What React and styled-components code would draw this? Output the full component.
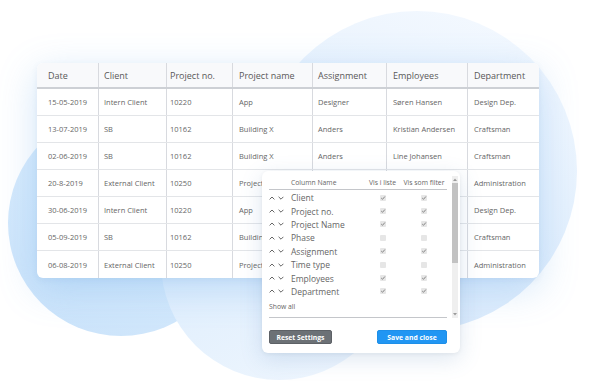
import React from "react";
import styled, { createGlobalStyle } from "styled-components";

/*
    Background blobs
    Table (header + rows)
    Column settings popup over the table
*/

const columns = [
  { title: "Date", width: 61, pad: 11 },
  { title: "Client", width: 68, pad: 6 },
  { title: "Project no.", width: 66, pad: 4 },
  { title: "Project name", width: 80, pad: 7 },
  { title: "Assignment", width: 74, pad: 6 },
  { title: "Employees", width: 81, pad: 7 },
  { title: "Department", width: 72, pad: 7 },
];

const rows = [
  ["15-05-2019", "Intern Client", "10220", "App", "Designer", "Søren Hansen", "Design Dep."],
  ["13-07-2019", "SB", "10162", "Building X", "Anders", "Kristian Andersen", "Craftsman"],
  ["02-06-2019", "SB", "10162", "Building X", "Anders", "Line Johansen", "Craftsman"],
  ["20-8-2019", "External Client", "10250", "Project", "", "", "Administration"],
  ["30-06-2019", "Intern Client", "10220", "App", "", "", "Design Dep."],
  ["05-09-2019", "SB", "10162", "Building", "", "", "Craftsman"],
  ["06-08-2019", "External Client", "10250", "Project", "", "", "Administration"],
];

const settings = [
  { name: "Client", list: true, filter: true },
  { name: "Project no.", list: true, filter: true },
  { name: "Project Name", list: true, filter: true },
  { name: "Phase", list: false, filter: false },
  { name: "Assignment", list: true, filter: true },
  { name: "Time type", list: false, filter: false },
  { name: "Employees", list: true, filter: true },
  { name: "Department", list: true, filter: true },
];

const gridCols = columns.map((c) => `${c.width}px`).join(" ");

const Chevron = ({ up }) => (
  <svg width="6" height="4" viewBox="0 0 6 4">
    <polyline
      points={up ? "0.6,3.4 3,1 5.4,3.4" : "0.6,0.8 3,3.2 5.4,0.8"}
      fill="none"
      stroke="#555"
      strokeWidth="0.9"
    />
  </svg>
);

const Check = ({ checked }) => (
  <CheckBox>
    {checked && (
      <svg width="6" height="6" viewBox="0 0 6 6">
        <polyline points="1.2,3 2.5,4.3 4.9,1.5" fill="none" stroke="#7a7a7a" strokeWidth="0.9" />
      </svg>
    )}
  </CheckBox>
);

const App = () => {
  return (
    <Stage>
      <GlobalStyle />
      <BlobRight />
      <BlobLeft />
      <BlobMiddle />

      <Table>
        <HeadRow>
          {columns.map((c, i) => (
            <HeadCell key={c.title} $pad={c.pad} $first={i === 0}>
              {c.title}
            </HeadCell>
          ))}
        </HeadRow>
        {rows.map((r, ri) => (
          <BodyRow key={ri} $last={ri === rows.length - 1}>
            {r.map((v, ci) => (
              <BodyCell key={ci} $pad={columns[ci].pad} $first={ci === 0}>
                {v}
              </BodyCell>
            ))}
          </BodyRow>
        ))}
      </Table>

      <Popup>
        <ScrollArea>
          <List>
            <ListHead>
              <span />
              <span>Column Name</span>
              <Centered>Vis i liste</Centered>
              <Centered>Vis som filter</Centered>
            </ListHead>
            <ListBody>
              {settings.map((s) => (
                <ListRow key={s.name}>
                  <Arrows>
                    <Chevron up />
                    <Chevron />
                  </Arrows>
                  <Label>{s.name}</Label>
                  <Centered>
                    <Check checked={s.list} />
                  </Centered>
                  <Centered>
                    <Check checked={s.filter} />
                  </Centered>
                </ListRow>
              ))}
            </ListBody>
            <ShowAll>Show all</ShowAll>
          </List>
          <Scrollbar>
            <ScrollArrow>
              <svg width="4" height="3" viewBox="0 0 4 3">
                <polygon points="0,3 2,0.5 4,3" fill="#9a9a9a" />
              </svg>
            </ScrollArrow>
            <Thumb />
            <ScrollArrow $bottom>
              <svg width="4" height="3" viewBox="0 0 4 3">
                <polygon points="0,0 2,2.5 4,0" fill="#9a9a9a" />
              </svg>
            </ScrollArrow>
          </Scrollbar>
        </ScrollArea>
        <Footer>
          <Button $variant="gray">Reset Settings</Button>
          <Button $variant="blue">Save and close</Button>
        </Footer>
      </Popup>
    </Stage>
  );
};

export default App;

const GlobalStyle = createGlobalStyle`
  html, body {
    margin: 0;
    padding: 0;
    background: #ffffff;
  }
  body {
    font-family: "Open Sans", "Liberation Sans", sans-serif;
  }
`;

const Stage = styled.div`
  position: relative;
  width: 600px;
  height: 389px;
  overflow: hidden;
  background: #ffffff;
  padding: 63px 0 0 37px;
  box-sizing: border-box;
`;

const Blob = styled.div`
  position: absolute;
  border-radius: 50%;
`;

const BlobRight = styled(Blob)`
  left: 257px;
  top: 11px;
  width: 320px;
  height: 320px;
  background: linear-gradient(200deg, #f6faff 0%, #e6f1fd 45%, #d6e8fb 100%);
`;

const BlobLeft = styled(Blob)`
  left: 8px;
  top: 110px;
  width: 226px;
  height: 226px;
  background: linear-gradient(30deg, #c9e2fa 0%, #d6eafc 50%, #e9f3fe 100%);
`;

const BlobMiddle = styled(Blob)`
  left: 161px;
  top: 144px;
  width: 236px;
  height: 236px;
  background: linear-gradient(150deg, #d5e9fc 0%, #e3f0fd 50%, #f1f7fe 100%);
`;

const Table = styled.div`
  position: relative;
  width: 502px;
  background: #ffffff;
  border-radius: 6px;
  overflow: hidden;
  box-shadow: 0 10px 38px rgba(90, 160, 235, 0.28), 0 2px 6px rgba(60, 110, 170, 0.08);
`;

const HeadRow = styled.div`
  display: grid;
  grid-template-columns: ${gridCols};
  height: 24px;
  background: #f8f9fb;
  border-bottom: 2px solid #cdd0d5;
`;

const HeadCell = styled.div`
  display: flex;
  align-items: center;
  padding-left: ${(p) => p.$pad - (p.$first ? 0 : 1)}px;
  border-left: ${(p) => (p.$first ? "none" : "1px solid #d8dadf")};
  font-size: 9px;
  color: #585858;
  white-space: nowrap;
  overflow: hidden;
`;

const BodyRow = styled.div`
  display: grid;
  grid-template-columns: ${gridCols};
  height: ${(p) => (p.$last ? 27 : 26)}px;
  border-bottom: ${(p) => (p.$last ? "none" : "1px solid #e3e5e8")};
`;

const BodyCell = styled.div`
  display: flex;
  align-items: center;
  padding-left: ${(p) => p.$pad - (p.$first ? 0 : 1)}px;
  border-left: ${(p) => (p.$first ? "none" : "1px solid #d8dadf")};
  font-size: 7.5px;
  color: #666666;
  white-space: nowrap;
  overflow: hidden;
`;

const Popup = styled.div`
  position: absolute;
  left: 262px;
  top: 171px;
  width: 198px;
  height: 182px;
  box-sizing: border-box;
  padding: 5px 2px 0 7px;
  background: #ffffff;
  border-radius: 6px;
  box-shadow: 0 6px 22px rgba(70, 120, 180, 0.18), 0 1px 4px rgba(0, 0, 0, 0.06);
  display: flex;
  flex-direction: column;
`;

const ScrollArea = styled.div`
  display: flex;
  flex-flow: row nowrap;
  gap: 5px;
  height: 142px;
`;

const List = styled.div`
  width: 178px;
  display: flex;
  flex-direction: column;
  border-bottom: 1px solid #c4c6ca;
  box-sizing: border-box;
`;

const rowGrid = `
  display: grid;
  grid-template-columns: 22px 73px 37px 46px;
  align-items: center;
`;

const ListHead = styled.div`
  ${rowGrid}
  height: 13px;
  border-bottom: 1px solid #c4c6ca;
  font-size: 6.8px;
  color: #666;
  white-space: nowrap;
`;

const ListBody = styled.div`
  display: flex;
  flex-direction: column;
  padding-top: 1px;
`;

const ListRow = styled.div`
  ${rowGrid}
  height: 13.4px;
`;

const Arrows = styled.div`
  display: flex;
  align-items: center;
  gap: 3px;
`;

const Label = styled.span`
  font-size: 8.5px;
  color: #666;
  white-space: nowrap;
`;

const Centered = styled.div`
  display: flex;
  justify-content: center;
  align-items: center;
`;

const CheckBox = styled.div`
  width: 6px;
  height: 6px;
  background: #e6e6e6;
  border-radius: 1px;
  display: flex;
`;

const ShowAll = styled.div`
  margin-top: auto;
  margin-bottom: 5px;
  font-size: 6.8px;
  color: #666;
  line-height: 10px;
`;

const Scrollbar = styled.div`
  width: 6px;
  background: #efefef;
  display: flex;
  flex-direction: column;
`;

const ScrollArrow = styled.div`
  height: 7px;
  display: flex;
  justify-content: center;
  align-items: center;
  margin-top: ${(p) => (p.$bottom ? "auto" : "0")};
`;

const Thumb = styled.div`
  height: 80px;
  background: #c2c2c2;
`;

const Footer = styled.div`
  width: 178px;
  display: flex;
  justify-content: space-between;
  padding-top: 12px;
`;

const Button = styled.div`
  height: 14px;
  padding: 0;
  width: ${(p) => (p.$variant === "blue" ? 70 : 63)}px;
  box-sizing: border-box;
  border-radius: 2px;
  display: flex;
  align-items: center;
  justify-content: center;
  font-size: 6.8px;
  font-weight: 700;
  color: #ffffff;
  background: ${(p) => (p.$variant === "blue" ? "#2196f3" : "#6c7176")};
  border: 1px solid ${(p) => (p.$variant === "blue" ? "#1e8fe8" : "#5d6166")};
`;
